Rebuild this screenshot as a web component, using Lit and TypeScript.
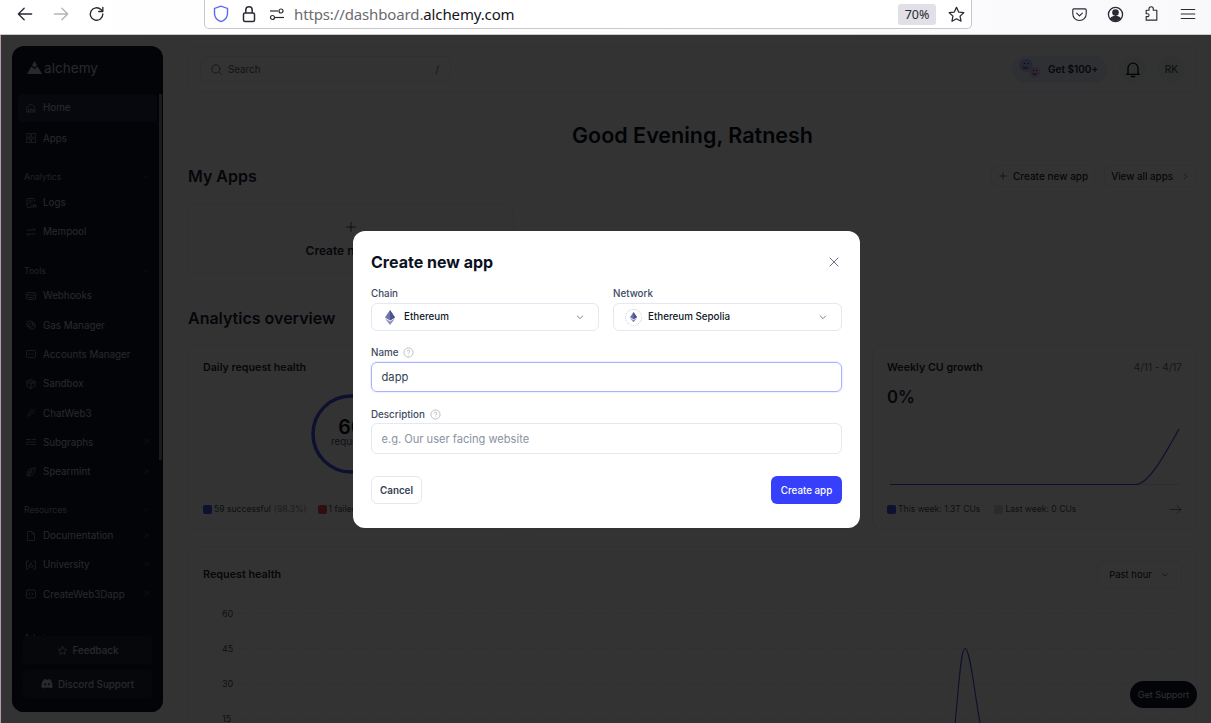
import { LitElement, html, css, svg } from 'lit';
import { customElement } from 'lit/decorators.js';

const ic = (body: unknown, size = 14, box = 24) => html`<svg
  width=${size}
  height=${size}
  viewBox="0 0 ${box} ${box}"
  fill="none"
  stroke="currentColor"
  stroke-width="1.6"
  stroke-linecap="round"
  stroke-linejoin="round"
>${body}</svg>`;

const navIcons: Record<string, unknown> = {
  home: svg`<path d="M4 10.5 12 4l8 6.5V20H4z"/><path d="M7 20v-5h10v5" fill="currentColor" fill-opacity=".25"/>`,
  apps: svg`<rect x="3" y="3" width="7.5" height="7.5"/><rect x="13.5" y="3" width="7.5" height="7.5"/><rect x="3" y="13.5" width="7.5" height="7.5"/><rect x="13.5" y="13.5" width="7.5" height="7.5"/>`,
  logs: svg`<path d="M19 9V5a2 2 0 0 0-2-2H6a2 2 0 0 0-2 2v14a2 2 0 0 0 2 2h6"/><path d="M8 8h7M8 12h3"/><circle cx="15" cy="18" r="2.5"/><circle cx="20" cy="18" r="2.5"/>`,
  mempool: svg`<path d="M4 8h16M16 4l4 4M20 16H4M8 20l-4-4"/>`,
  webhooks: svg`<rect x="3" y="5" width="18" height="14" rx="3"/><path d="M3 10h18M7 15h10"/>`,
  gas: svg`<circle cx="10" cy="10" r="6.5"/><circle cx="14" cy="14" r="6.5"/>`,
  accounts: svg`<rect x="3" y="5" width="18" height="14" rx="2"/><path d="M8 12h2M14 12h2"/>`,
  sandbox: svg`<path d="M12 3l8 4.5v9L12 21l-8-4.5v-9z"/><path d="M4 7.5l8 4.5 8-4.5M12 12v9M8 5.2l8 4.6"/>`,
  chat: svg`<path d="M14 5l5 5-4 4-5-5zM8 13l3 3-3 3-3-3zM19 4l1 1"/>`,
  subgraphs: svg`<path d="M3 7h8M15 7h6M3 12h18M3 17h5M12 17h9"/>`,
  spearmint: svg`<path d="M20 4C10 4 4 9 4 15c0 3 2 5 5 5 6 0 11-6 11-16zM4 20 15 9M8 10v7M12 7v7"/>`,
  docs: svg`<path d="M6 3h8l5 5v13H6z"/><path d="M14 3v5h5"/>`,
  university: svg`<path d="M7 4H3v16h4M17 4h4v16h-4"/><path d="M12 8l4 8H8z"/>`,
  web3: svg`<rect x="3" y="4" width="18" height="16" rx="3"/><path d="M10 10l-2 2 2 2M14 10l2 2-2 2"/>`,
};

const ext = ic(svg`<path d="M7 17 17 7M9 7h8v8"/>`, 10);
const chevron = ic(svg`<path d="M6 9l6 6 6-6"/>`, 10);
const ethIcon = (size: number) => html`<svg width=${size} height=${size * 1.5} viewBox="0 0 16 24">
  <path d="M8 0 0 12l8 4.6L16 12z" fill="#6f74a8" />
  <path d="M8 0v16.6L16 12z" fill="#4c5190" />
  <path d="M0 13.6 8 24l8-10.4-8 4.7z" fill="#8b90bd" />
</svg>`;
const helpIcon = html`<svg width="11" height="11" viewBox="0 0 12 12" fill="none" stroke="#a3abb8" stroke-width=".8">
  <circle cx="6" cy="6" r="5" />
  <path d="M4.5 4.7C4.6 3.8 5.2 3.4 6 3.4c.9 0 1.5.5 1.5 1.2 0 1.1-1.5 1.1-1.5 2.3M6 8.2v.8" />
</svg>`;

type NavItem = { icon: string; label: string; ext?: boolean };
type NavGroup = { title: string; cls: string; items: NavItem[] };

const groups: NavGroup[] = [
  { title: 'Analytics', cls: 'g1', items: [{ icon: 'logs', label: 'Logs' }, { icon: 'mempool', label: 'Mempool' }] },
  {
    title: 'Tools',
    cls: 'g2',
    items: [
      { icon: 'webhooks', label: 'Webhooks' },
      { icon: 'gas', label: 'Gas Manager' },
      { icon: 'accounts', label: 'Accounts Manager' },
      { icon: 'sandbox', label: 'Sandbox' },
      { icon: 'chat', label: 'ChatWeb3' },
      { icon: 'subgraphs', label: 'Subgraphs', ext: true },
      { icon: 'spearmint', label: 'Spearmint', ext: true },
    ],
  },
  {
    title: 'Resources',
    cls: 'g3',
    items: [
      { icon: 'docs', label: 'Documentation', ext: true },
      { icon: 'university', label: 'University', ext: true },
      { icon: 'web3', label: 'CreateWeb3Dapp', ext: true },
    ],
  },
  { title: 'Admin', cls: 'g4', items: [] },
];

@customElement('app-root')
export class AppRoot extends LitElement {
  static styles = css`
    :host {
      display: flex;
      flex-direction: column;
      width: 1211px;
      height: 723px;
      overflow: hidden;
      font-family: Inter, 'Liberation Sans', sans-serif;
      font-size: 9.8px;
      color: #111827;
      background: #fff;
    }
    svg {
      display: block;
      flex: none;
    }

    /* browser chrome */
    .chrome {
      flex: none;
      height: 34px;
      display: flex;
      align-items: flex-start;
      background: linear-gradient(90deg, #fff, #f9f9fb);
      border-bottom: 1px solid #c9c9c9;
      color: #2b2a33;
    }
    .navs {
      width: 204px;
      height: 28px;
      display: flex;
      align-items: center;
      padding-left: 15px;
      gap: 16px;
      box-sizing: border-box;
    }
    .fwd {
      color: #b4b4b8;
    }
    .urlbar {
      width: 768px;
      height: 29px;
      box-sizing: border-box;
      display: flex;
      align-items: center;
      background: #fff;
      border: 1px solid #c8c8cc;
      border-top: 0;
      border-radius: 0 0 5px 5px;
      padding: 0 5px 0 8px;
    }
    .url {
      margin-left: 9px;
      font-family: 'Noto Sans', sans-serif;
      font-size: 15px;
      letter-spacing: -0.13px;
      color: #6b6b72;
      flex: 1;
    }
    .url b {
      font-weight: 400;
      color: #15141a;
    }
    .zoom {
      width: 38px;
      height: 21px;
      display: flex;
      align-items: center;
      justify-content: center;
      background: #e0e0e6;
      border-radius: 3px;
      font-family: 'Noto Sans', sans-serif;
      font-size: 12.5px;
      margin-right: 11px;
    }
    .lockic {
      margin-left: 12px;
    }
    .tools {
      display: flex;
      align-items: center;
      height: 28px;
      margin-left: 99px;
      gap: 19px;
    }

    /* page */
    .page {
      flex: 1;
      min-height: 0;
      position: relative;
      display: flex;
      border-left: 1px solid #b89ab0;
      overflow: hidden;
    }
    .sidebar {
      flex: none;
      width: 151px;
      height: 666px;
      margin: 11px 0 0 11px;
      border-radius: 12px;
      background: #0f1426;
      color: #c8cbd4;
      display: flex;
      flex-direction: column;
      position: relative;
    }
    .logo {
      height: 48px;
      flex: none;
      display: flex;
      align-items: center;
      padding: 0 0 5px 15px;
      box-sizing: border-box;
      gap: 2px;
      font-size: 13.6px;
    }
    .nav {
      flex: 1;
      min-height: 0;
      overflow: hidden;
      padding: 0 6px;
    }
    .scrollbar {
      position: absolute;
      left: 147px;
      top: 48px;
      width: 2.5px;
      height: 366px;
      background: #80828c;
    }
    .item {
      height: 29.33px;
      display: flex;
      align-items: center;
      padding: 0 6px 0 7px;
      gap: 6px;
      color: #c8cbd4;
    }
    .item > svg {
      opacity: 0.75;
    }
    .item span {
      flex: 1;
    }
    .item .ext {
      opacity: 0.4;
    }
    .item.top {
      height: 28px;
      margin-bottom: 2px;
      border-radius: 5px;
    }
    .item.active {
      background: #272c40;
    }
    .item.active span {
      margin-top: -1px;
    }
    .section {
      height: 20px;
      display: flex;
      align-items: center;
      justify-content: space-between;
      padding: 0 6px;
      font-size: 8.6px;
      color: #a0a5b4;
    }
    .section svg {
      opacity: 0.6;
    }
    .g1 {
      margin-top: 15px;
      margin-bottom: 1px;
    }
    .g2 {
      margin-top: 14.5px;
    }
    .g3 {
      margin-top: 13.5px;
      margin-bottom: 1px;
    }
    .g4 {
      margin-top: 19px;
    }
    .foot {
      flex: none;
      display: flex;
      flex-direction: column;
      gap: 6px;
      padding: 0 11px 14px;
      background: #0f1426;
      border-radius: 0 0 12px 12px;
    }
    .foot div {
      height: 28px;
      display: flex;
      align-items: center;
      justify-content: center;
      gap: 5px;
      background: #1f2436;
      border-radius: 3px;
      font-weight: 500;
      color: #c8cbd4;
    }

    .main {
      flex: none;
      width: 1009px;
      margin: 11px 0 0 25px;
      display: flex;
      flex-direction: column;
    }
    .main > * {
      flex: none;
    }
    .topbar {
      height: 46px;
      box-sizing: border-box;
      border: 1px solid #eceef3;
      border-radius: 10px;
      display: flex;
      align-items: center;
      padding: 0 11px;
    }
    .search {
      width: 251px;
      height: 26px;
      box-sizing: border-box;
      border: 1px solid #eceef3;
      border-radius: 6px;
      display: flex;
      align-items: center;
      padding: 0 11px 0 9px;
      gap: 5px;
      color: #5c6370;
    }
    .search span {
      flex: 1;
    }
    .pill {
      margin-left: auto;
      width: 95px;
      height: 27px;
      box-sizing: border-box;
      border-radius: 14px;
      background: #ebf0fd;
      display: flex;
      align-items: center;
      padding-left: 7px;
      gap: 5px;
      font-size: 10px;
      font-weight: 600;
      color: #1f2937;
    }
    .round {
      width: 27px;
      height: 27px;
      border-radius: 50%;
      background: #f1f2f5;
      display: flex;
      align-items: center;
      justify-content: center;
      margin-left: 12px;
      color: #111827;
      font-weight: 500;
      font-size: 10px;
    }
    .round.rk {
      color: #4b5563;
    }
    h1 {
      margin: 28px 0 0;
      height: 30px;
      line-height: 30px;
      text-align: center;
      font-size: 21.5px;
      font-weight: 600;
      color: #0b1020;
    }
    .head {
      display: flex;
      align-items: center;
      height: 24px;
      font-size: 16px;
      font-weight: 600;
      color: #1a2133;
    }
    .head.apps {
      margin-top: 14px;
    }
    .btn {
      height: 22px;
      box-sizing: border-box;
      border: 1px solid #eceef3;
      border-radius: 5px;
      display: flex;
      align-items: center;
      gap: 5px;
      font-size: 9.8px;
      font-weight: 500;
      padding: 0 6px;
      color: #1f2937;
    }
    .btn.first {
      margin-left: auto;
      margin-right: 9px;
      font-size: 10px;
    }
    .btn.all {
      gap: 8px;
    }
    .createcard {
      width: 326px;
      height: 70px;
      margin-top: 16px;
      margin-bottom: 32px;
      box-sizing: border-box;
      border: 1px solid #eceef3;
      border-radius: 8px;
      display: flex;
      flex-direction: column;
      align-items: center;
      padding-top: 16px;
      font-size: 12px;
      line-height: 14px;
      font-weight: 600;
      color: #1f2937;
      gap: 11px;
    }
    .cards {
      display: grid;
      grid-template-columns: 326px 326px 325px;
      gap: 16px;
      margin-top: 15px;
    }
    .card {
      height: 185px;
      box-sizing: border-box;
      border: 1px solid #eceef3;
      border-radius: 10px;
      padding: 14px 14px 14px;
      display: flex;
      flex-direction: column;
    }
    .cardhead {
      height: 14px;
      display: flex;
      justify-content: space-between;
      align-items: center;
      font-size: 10.7px;
      font-weight: 600;
      color: #1f2937;
      flex: none;
    }
    .date {
      font-weight: 400;
      font-size: 10px;
      color: #6b7280;
    }
    .ring {
      display: grid;
      place-items: center;
      margin-top: 20px;
    }
    .ring > * {
      grid-area: 1 / 1;
    }
    .ringtext {
      text-align: center;
      font-size: 9.8px;
      color: #4b5563;
      margin-top: -3px;
    }
    .ringtext b {
      display: block;
      font-size: 19.6px;
      line-height: 17px;
      font-weight: 600;
      color: #0b1020;
    }
    .pct {
      margin-top: 13px;
      font-size: 16.8px;
      font-weight: 600;
      line-height: 20px;
      color: #1f2937;
    }
    .legend {
      margin-top: auto;
      display: flex;
      align-items: center;
      height: 12px;
      font-size: 8.6px;
      color: #4b5563;
      white-space: nowrap;
      overflow: hidden;
    }
    .legend i {
      width: 9px;
      height: 9px;
      border-radius: 2px;
      margin-right: 2px;
      flex: none;
    }
    .legend em {
      font-style: normal;
      color: #8a909c;
      margin-left: 3px;
    }
    .legend span {
      margin-right: 11px;
    }
    .legend.wide span {
      margin-right: 14px;
    }
    .linechart {
      margin-top: 3px;
    }
    .arrow {
      margin-left: auto;
      color: #6b7280;
    }
    .reqcard {
      margin-top: 16px;
      height: 220px;
      box-sizing: border-box;
      border: 1px solid #eceef3;
      border-radius: 10px;
      padding: 14px 14px 0;
    }
    .reqhead {
      display: flex;
      justify-content: space-between;
      font-size: 10.8px;
      font-weight: 600;
      color: #1f2937;
      line-height: 28px;
    }
    .past {
      width: 85px;
      height: 27px;
      box-sizing: border-box;
      border: 1px solid #eceef3;
      border-radius: 5px;
      display: flex;
      align-items: center;
      justify-content: center;
      gap: 8px;
      font-size: 9.5px;
      font-weight: 400;
      color: #111827;
    }
    .plot {
      margin-top: 14px;
    }
    .plot text {
      font: 9px Inter, sans-serif;
      fill: #4b5563;
    }
    .support {
      position: absolute;
      right: 14px;
      bottom: 15px;
      width: 67px;
      height: 27px;
      border-radius: 14px;
      background: #0f1426;
      color: #e8eaf0;
      font-size: 9px;
      display: flex;
      align-items: center;
      justify-content: center;
    }

    /* dialog */
    .overlay {
      position: absolute;
      inset: 0;
      background: rgba(0, 0, 0, 0.8);
      display: flex;
      align-items: center;
      justify-content: center;
      padding: 1px 0 0 1px;
    }
    .modal {
      width: 507px;
      height: 297px;
      box-sizing: border-box;
      background: #fff;
      border-radius: 12px;
      padding: 18px 18px 24px;
      display: flex;
      flex-direction: column;
    }
    .mhead {
      height: 26px;
      display: flex;
      align-items: center;
      justify-content: space-between;
      font-size: 16px;
      font-weight: 700;
      color: #0b1222;
      flex: none;
    }
    .mhead svg {
      color: #5c6678;
      margin-right: 1px;
    }
    .row {
      display: grid;
      grid-template-columns: 228px 229px;
      gap: 14px;
      margin-top: 11px;
    }
    label {
      display: flex;
      align-items: center;
      gap: 5px;
      height: 14px;
      font-weight: 500;
      color: #3d4a60;
      margin-bottom: 3px;
    }
    .select {
      height: 28px;
      box-sizing: border-box;
      border: 1px solid #e4e8f2;
      border-radius: 6px;
      display: flex;
      align-items: center;
      padding: 0 13px;
      gap: 9px;
      font-weight: 500;
      color: #101828;
    }
    .select span {
      flex: 1;
      margin-top: -1px;
    }
    .select svg.chev {
      color: #5c6678;
    }
    .select.net {
      padding-left: 11px;
      gap: 6px;
    }
    .netlogo {
      width: 17px;
      height: 17px;
      box-sizing: border-box;
      border: 1px dotted #c9ccd6;
      border-radius: 50%;
      display: flex;
      align-items: center;
      justify-content: center;
    }
    .field {
      margin-top: 14px;
    }
    .field + .field {
      margin-top: 15px;
    }
    .field + .field label {
      margin-bottom: 2px;
    }
    .input {
      height: 31px;
      box-sizing: border-box;
      border: 1px solid #e4e8f2;
      border-radius: 6px;
      display: flex;
      align-items: center;
      padding: 0 9.5px;
      font-size: 11.1px;
      color: #8993a4;
    }
    .input.focus {
      height: 30px;
      font-size: 11.2px;
      border: 1.5px solid #a9b2ff;
      box-shadow: 0 0 2px #c4caff;
      color: #334155;
    }
    .actions {
      margin-top: auto;
      display: flex;
      justify-content: space-between;
    }
    .cancel,
    .create {
      height: 28px;
      box-sizing: border-box;
      border-radius: 6px;
      display: flex;
      align-items: center;
      justify-content: center;
      font-weight: 600;
    }
    .cancel {
      width: 51px;
      border: 1px solid #e4e8f2;
      color: #334155;
    }
    .create {
      width: 71px;
      background: #363ff9;
      color: #fff;
      font-weight: 500;
    }
  `;

  private renderNav() {
    return html`
      <div class="item top active">${ic(navIcons.home, 12)}<span>Home</span></div>
      <div class="item top">${ic(navIcons.apps, 12)}<span>Apps</span></div>
      ${groups.map(
        (g) => html`
          <div class="section ${g.cls}">${g.title}${chevron}</div>
          ${g.items.map(
            (it) => html`<div class="item">
              ${ic(navIcons[it.icon], 12)}<span>${it.label}</span>
              ${it.ext ? html`<div class="ext">${ext}</div>` : ''}
            </div>`,
          )}
        `,
      )}
    `;
  }

  render() {
    return html`
      <div class="chrome">
        <div class="navs">
          ${ic(svg`<path d="M20 12H4M11 5l-7 7 7 7"/>`, 20)}
          <div class="fwd">${ic(svg`<path d="M4 12h16M13 5l7 7-7 7"/>`, 20)}</div>
          ${ic(svg`<path d="M19 12a7.5 7.5 0 1 1-2.2-5.3L19 9M19 4v5h-5"/>`, 20)}
        </div>
        <div class="urlbar">
          <svg width="16" height="18" viewBox="0 0 16 18" fill="none" stroke="#5b6bf0" stroke-width="1.4">
            <path d="M8 1.2 1.5 3.4v5c0 4 3 6.8 6.500 8.200 3.500-1.400 6.500-4.200 6.500-8.200v-5z" />
          </svg>
          <svg class="lockic" width="16" height="18" viewBox="0 0 16 18" fill="none" stroke="#2b2a33" stroke-width="1.5">
            <rect x="2.5" y="8" width="11" height="8.5" rx="1.5" />
            <path d="M4.8 8V5a3.2 3.2 0 0 1 6.4 0v3" />
          </svg>
          <svg class="lockic" width="16" height="16" viewBox="0 0 16 16" fill="none" stroke="#2b2a33" stroke-width="1.2">
            <path d="M1 5h8" />
            <circle cx="12" cy="5" r="2" />
            <circle cx="3.5" cy="11.5" r="2" />
            <path d="M6 11.5h9" />
          </svg>
          <div class="url">https://dashboard.<b>alchemy.com</b></div>
          <div class="zoom">70%</div>
          ${ic(svg`<path d="M12 3l2.8 5.9 6.4.8-4.7 4.4 1.2 6.4L12 17.4l-5.7 3.1 1.2-6.4L2.8 9.7l6.4-.8z"/>`, 19)}
        </div>
        <div class="tools">
          ${ic(svg`<path d="M4 4h16a1.5 1.5 0 0 1 1.5 1.5V11a9.5 9.5 0 0 1-19 0V5.500A1.500 1.500 0 0 1 4 4z"/><path d="M8 10l4 4 4-4"/>`, 17)}
          <svg width="17" height="17" viewBox="0 0 18 18" fill="none" stroke="#2b2a33" stroke-width="1.4">
            <circle cx="9" cy="9" r="7.5" />
            <circle cx="9" cy="7" r="2.8" fill="#2b2a33" />
            <path d="M3.800 13.500C5 11.500 7 11 9 11s4 .5 5.200 2.500L9 16z" fill="#2b2a33" />
          </svg>
          ${ic(svg`<path d="M9 7H5v5h2a2 2 0 0 1 0 4H5v5h15V7h-5V5a3 3 0 0 0-6 0z" transform="translate(-.5 -1)"/>`, 17)}
          ${ic(svg`<path d="M3 6h18M3 12h18M3 18h18"/>`, 18)}
        </div>
      </div>

      <div class="page">
        <aside class="sidebar">
          <div class="logo">
            <svg width="15" height="13" viewBox="0 0 15 13" fill="currentColor">
              <path d="M7.500 0 10 4.400 7.500 6.500 5 4.400zM4.300 5.600 7.500 8l3.200-2.400L15 13H0z" />
            </svg>
            <span>alchemy</span>
          </div>
          <div class="nav">${this.renderNav()}</div>
          <div class="scrollbar"></div>
          <div class="foot">
            <div>${ic(svg`<path d="M12 3l2.800 5.900 6.400.8-4.700 4.400 1.200 6.400L12 17.400l-5.700 3.100 1.200-6.400L2.800 9.700l6.400-.8z"/>`, 11)}Feedback</div>
            <div>
              <svg width="12" height="10" viewBox="0 0 12 10" fill="currentColor">
                <path d="M2.500.8C3.300.4 4 .2 4.700.1l.3.6h2l.3-.6c.7.1 1.400.3 2.200.7C11 3 11.700 5.500 11.600 8.300c-.9.700-1.800 1.100-2.700 1.300l-.6-1c-.5-.1-1.500.2-2.300.2s-1.800-.3-2.300-.2l-.6 1C2.200 9.400 1.300 9 .4 8.300.3 5.500 1 3 2.500.8zM4.200 4.200c-.6 0-1 .5-1 1.100s.4 1.100 1 1.100 1-.5 1-1.100-.4-1.100-1-1.100zm3.600 0c-.6 0-1 .5-1 1.100s.4 1.100 1 1.100 1-.5 1-1.100-.4-1.100-1-1.100z" />
              </svg>
              Discord Support
            </div>
          </div>
        </aside>

        <div class="main">
          <div class="topbar">
            <div class="search">
              ${ic(svg`<circle cx="11" cy="11" r="7.500"/><path d="M17 17l4 4"/>`, 13)}
              <span>Search</span>/
            </div>
            <div class="pill">
              <svg width="24" height="22" viewBox="0 0 24 22" fill="none" stroke="#111" stroke-width=".9">
                <circle cx="7" cy="7.200" r="6.500" fill="#b9c2ff" stroke="none" />
                <circle cx="16" cy="14.200" r="5.500" fill="#d9c4ee" stroke="none" />
                <path d="M4 9c1.200 1.600 3.600 1.600 5 .3M13.500 15.500c1 1 3.200 1 4.200 0M5.500 5v1M9 5v1M14.500 12v1M17.500 12v1" />
              </svg>
              Get $100+
            </div>
            <div class="round">${ic(svg`<path d="M6 17V11a6 6 0 0 1 12 0v6l1.500 1.500h-15zM10 21h4"/>`, 20)}</div>
            <div class="round rk">RK</div>
          </div>

          <h1>Good Evening, Ratnesh</h1>

          <div class="head apps">
            My Apps
            <div class="btn first">${ic(svg`<path d="M12 4v16M4 12h16"/>`, 10)}Create new app</div>
            <div class="btn all">View all apps ${ic(svg`<path d="M9 6l6 6-6 6"/>`, 9)}</div>
          </div>
          <div class="createcard">
            ${ic(svg`<path d="M12 3v18M3 12h18"/>`, 12)}
            <div>Create new app</div>
          </div>

          <div class="head">Analytics overview</div>
          <div class="cards">
            <div class="card">
              <div class="cardhead">Daily request health</div>
              <div class="ring">
                <svg width="80" height="80" viewBox="0 0 80 80" fill="none">
                  <circle cx="40" cy="40" r="38" stroke="#4452e8" stroke-width="3.500" />
                </svg>
                <div class="ringtext"><b>60</b>requests</div>
              </div>
              <div class="legend">
                <i style="background:#4452e8"></i><span>59 successful<em>(98.3%)</em></span>
                <i style="background:#e5484d"></i><span>1 failed</span>
              </div>
            </div>
            <div class="card"></div>
            <div class="card">
              <div class="cardhead">Weekly CU growth <span class="date">4/11 - 4/17</span></div>
              <div class="pct">0%</div>
              <svg class="linechart" width="295" height="82" viewBox="0 0 295 82" fill="none">
                <path d="M3 74.500H293" stroke="#e5e7ee" />
                <path d="M3 74.500H249C262 74 278 44 292 19" stroke="#3f4ce0" stroke-width="1.200" />
              </svg>
              <div class="legend wide">
                <i style="background:#4452e8"></i><span>This week: 1.3T CUs</span>
                <i style="background:#d1d5db"></i><span>Last week: 0 CUs</span>
                <div class="arrow">${ic(svg`<path d="M2 12h20M15 5l7 7-7 7"/>`, 13)}</div>
              </div>
            </div>
          </div>

          <div class="reqcard">
            <div class="reqhead">
              Request health
              <div class="past">Past hour ${ic(svg`<path d="M6 9l6 6 6-6"/>`, 10)}</div>
            </div>
            <svg class="plot" width="979" height="150" viewBox="0 0 979 150" fill="none">
              ${[0, 35, 70, 105].map(
                (y, i) => svg`
                  <path d="M35 ${y + 10.5}H979" stroke="#dfe1e8" stroke-dasharray="1 2" />
                  <text x="19" y=${y + 14}>${[60, 45, 30, 15][i]}</text>
                `,
              )}
              <path d="M749 150C755 100 757 45.500 762 45.500C768 45.500 772 100 780 135" stroke="#3f4ce0" stroke-width="1.100" />
            </svg>
          </div>
        </div>

        <div class="support">Get Support</div>

        <div class="overlay">
          <div class="modal">
            <div class="mhead">
              Create new app
              ${ic(svg`<path d="M5 5l14 14M19 5 5 19"/>`, 14)}
            </div>
            <div class="row">
              <div>
                <label>Chain</label>
                <div class="select">
                  ${ethIcon(10)}<span>Ethereum</span>
                  <svg class="chev" width="10" height="10" viewBox="0 0 24 24" fill="none" stroke="currentColor" stroke-width="2"><path d="M5 9l7 7 7-7" /></svg>
                </div>
              </div>
              <div>
                <label>Network</label>
                <div class="select net">
                  <div class="netlogo">${ethIcon(7)}</div>
                  <span>Ethereum Sepolia</span>
                  <svg class="chev" width="10" height="10" viewBox="0 0 24 24" fill="none" stroke="currentColor" stroke-width="2"><path d="M5 9l7 7 7-7" /></svg>
                </div>
              </div>
            </div>
            <div class="field">
              <label>Name ${helpIcon}</label>
              <div class="input focus">dapp</div>
            </div>
            <div class="field">
              <label>Description ${helpIcon}</label>
              <div class="input">e.g. Our user facing website</div>
            </div>
            <div class="actions">
              <div class="cancel">Cancel</div>
              <div class="create">Create app</div>
            </div>
          </div>
        </div>
      </div>
    `;
  }
}
